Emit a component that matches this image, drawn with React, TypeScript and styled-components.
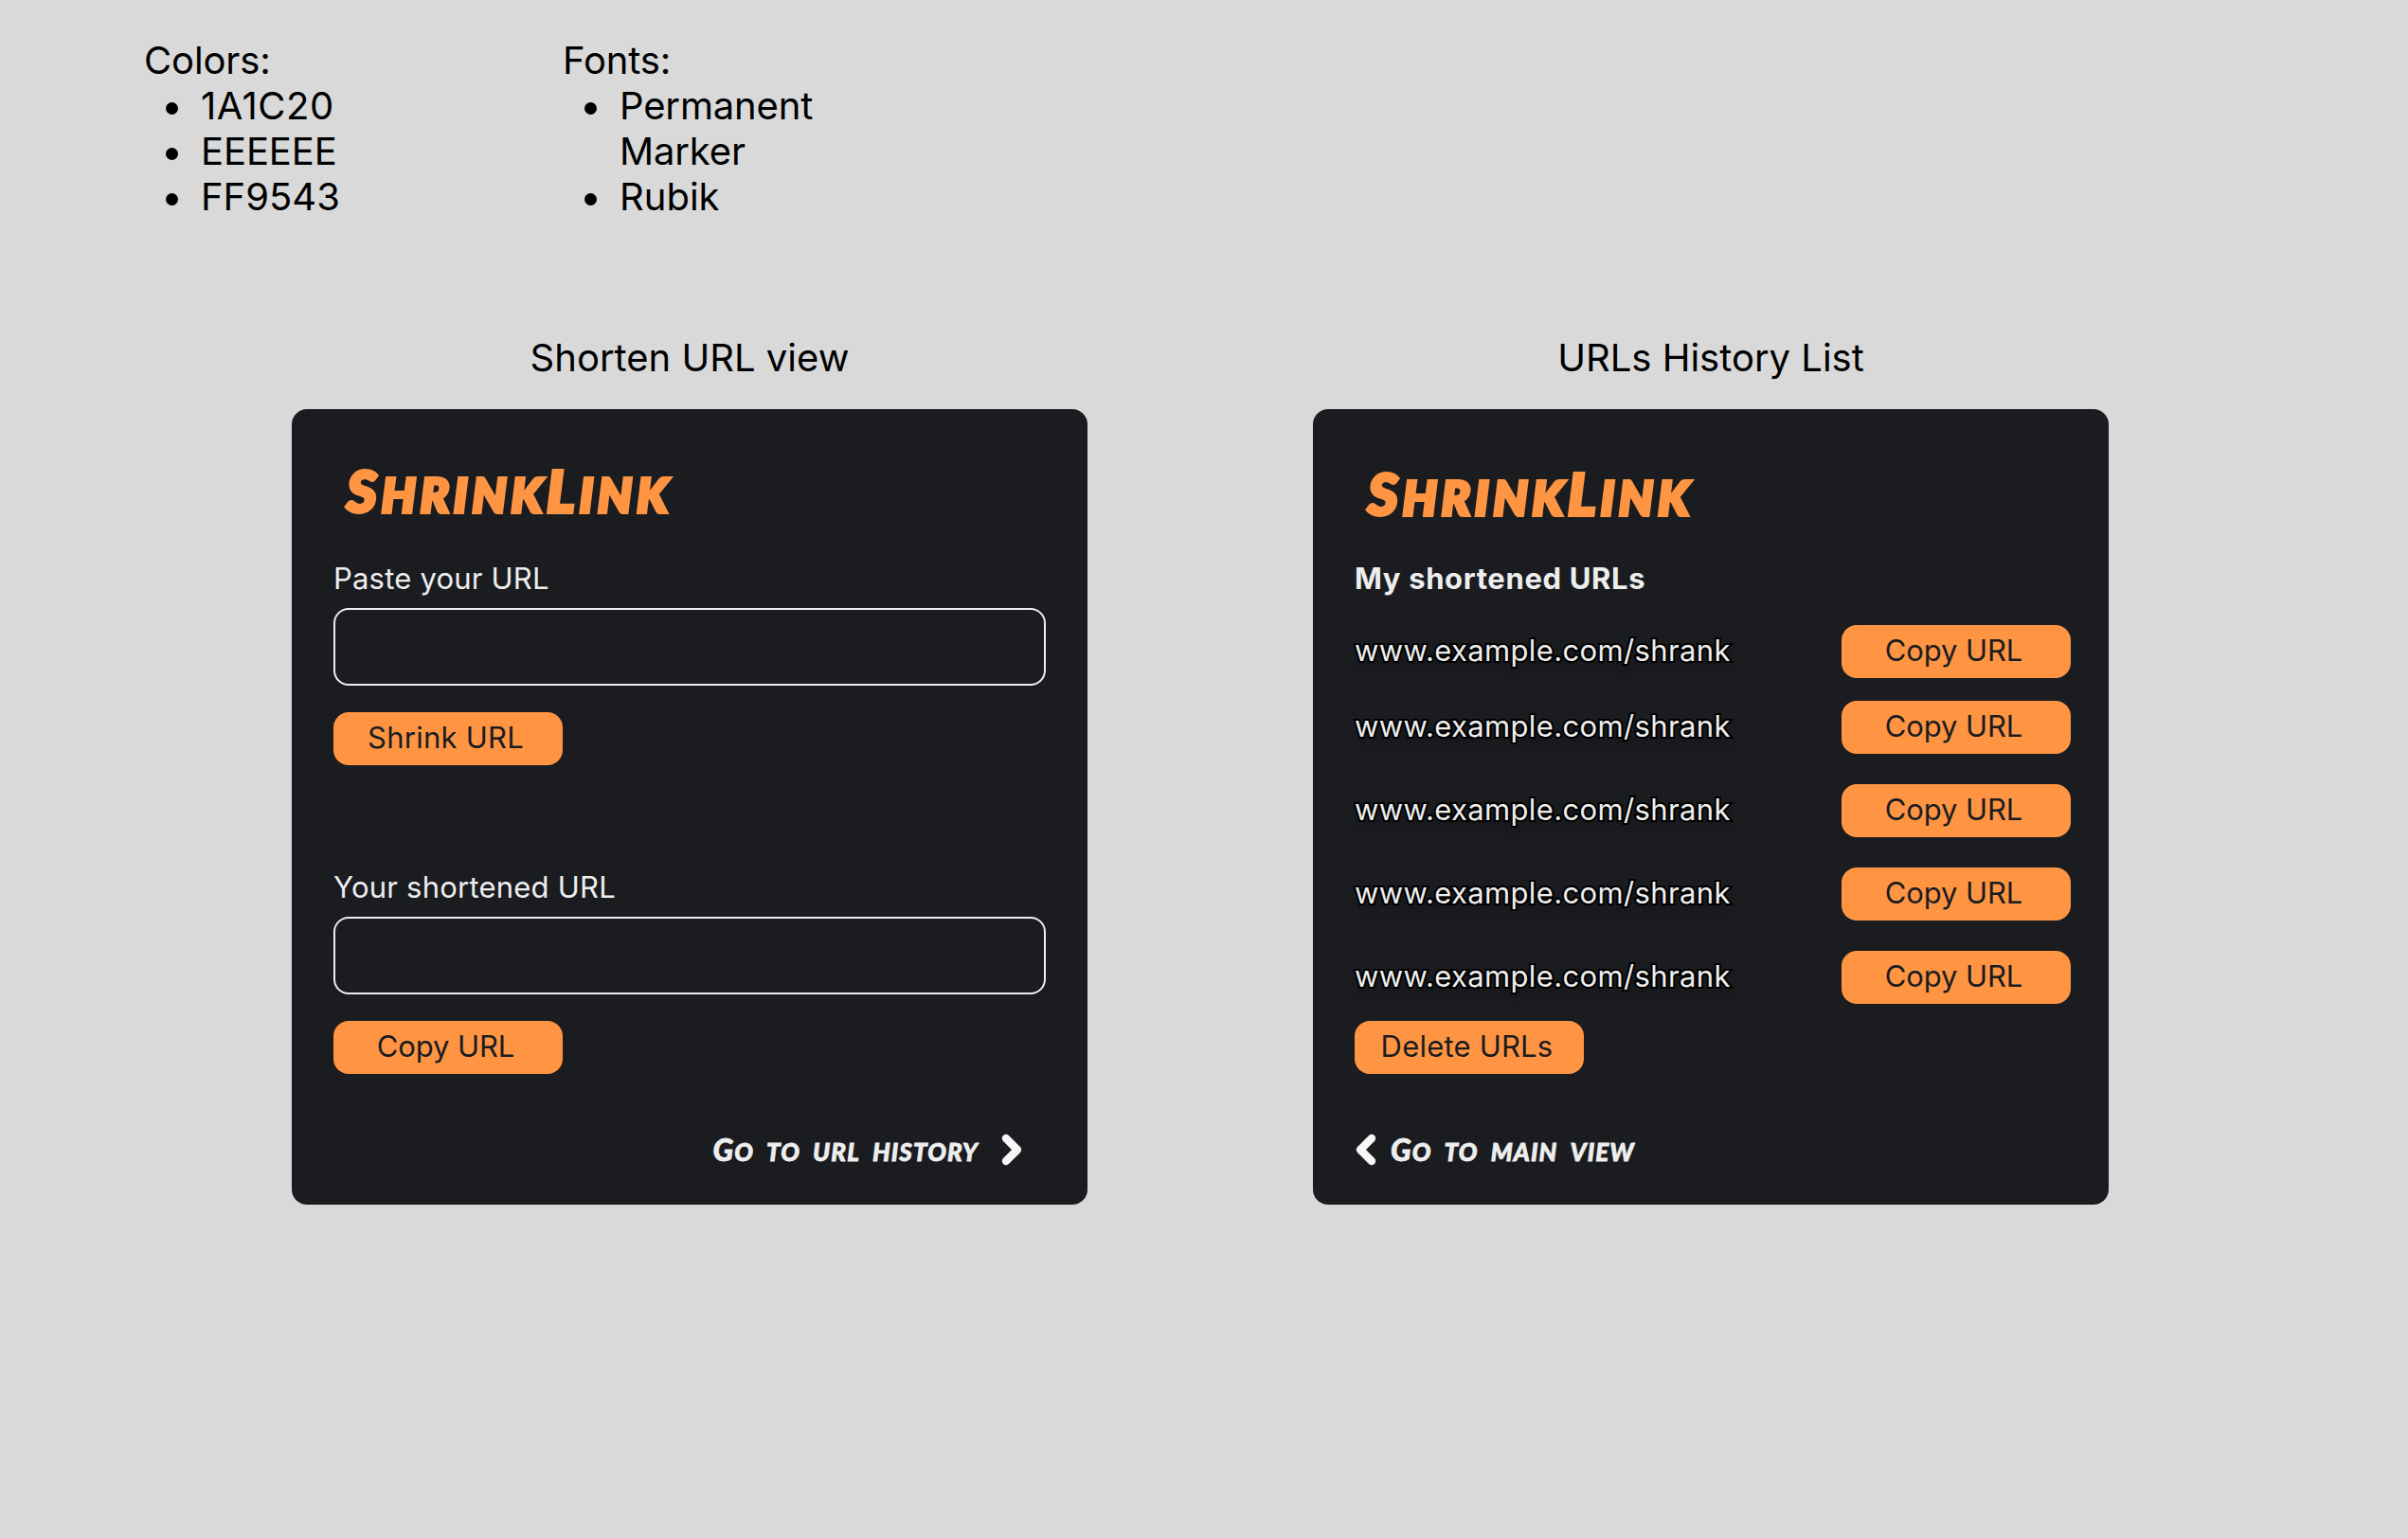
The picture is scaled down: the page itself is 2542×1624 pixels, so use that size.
import React from "react";
import styled, { createGlobalStyle } from "styled-components";

const color = {
  canvas: "#d9d9d9",
  dark: "#1a1c20",
  light: "#eeeeee",
  accent: "#ff9543",
};

const GlobalStyle = createGlobalStyle`
  *, *::before, *::after { box-sizing: border-box; }
  body { margin: 0; background: ${color.canvas}; }
`;

const Canvas = styled.main`
  width: 2542px;
  height: 1624px;
  overflow: hidden;
  background: ${color.canvas};
  color: #000;
  font: 400 40px/48px Inter, "Liberation Sans", sans-serif;
`;

const Notes = styled.header`
  display: flex;
  padding: 40px 0 0 152px;
  height: 354px;
`;

const Note = styled.section`
  width: 442px;
`;

const NoteTitle = styled.div`
  height: 48px;
  letter-spacing: -0.15px;
`;

const NoteList = styled.ul`
  list-style: none;
  margin: 0;
  padding: 0 0 0 23px;
  width: 290px;
`;

const NoteItem = styled.li<{ $spacing: number }>`
  display: flex;
  gap: 24px;
  letter-spacing: ${(p) => p.$spacing}px;

  &::before {
    content: "";
    flex: none;
    width: 13px;
    height: 13px;
    margin-top: 20px;
    border-radius: 50%;
    background: #000;
  }
`;

const Board = styled.div`
  display: flex;
  gap: 238px;
  padding-left: 308px;
`;

const View = styled.section`
  width: 840px;
`;

const ViewTitle = styled.h2`
  margin: 0 0 30px;
  font: inherit;
  text-align: center;
`;

const Card = styled.div<{ $right: number }>`
  display: flex;
  flex-direction: column;
  height: 840px;
  padding: 0 ${(p) => p.$right}px 0 44px;
  border-radius: 16px;
  background: ${color.dark};
  color: ${color.light};
  font: 400 31px/38px Inter, "Liberation Sans", sans-serif;
`;

const Marker = styled.span`
  font-family: Lato, "Liberation Sans", sans-serif;
  font-style: italic;
  font-weight: 900;
  font-variant-caps: small-caps;
  white-space: pre;
`;

const Small = styled.span`
  font-size: 1.17em;
`;

const Logo = styled(Marker)<{ $drop?: number }>`
  display: block;
  height: 160px;
  padding: ${(p) => 52 + (p.$drop ?? 0)}px 0 0 14px;
  color: ${color.accent};
  font-size: 61px;
  line-height: 60px;
  letter-spacing: 5px;
  -webkit-text-stroke: 4px ${color.accent};
`;

const Label = styled.label<{ $spacing: number; $bold?: boolean }>`
  height: 50px;
  font-weight: ${(p) => (p.$bold ? 700 : 400)};
  letter-spacing: ${(p) => p.$spacing}px;
`;

const Field = styled.input`
  flex: none;
  width: 752px;
  height: 82px;
  margin: 0 0 28px;
  padding: 0 20px;
  border: 2px solid ${color.light};
  border-radius: 16px;
  background: transparent;
  color: inherit;
  font: inherit;
  outline: none;
`;

const Button = styled.button<{ $spacing?: number }>`
  flex: none;
  width: 242px;
  height: 56px;
  padding: 0 5px 2px 0;
  border: 0;
  border-radius: 16px;
  background: ${color.accent};
  color: ${color.dark};
  font: inherit;
  letter-spacing: ${(p) => p.$spacing ?? -0.1}px;
  text-align: center;
`;

const Group = styled.div`
  display: flex;
  flex-direction: column;
  height: 326px;
`;

const List = styled.div`
  display: flex;
  flex-direction: column;
  gap: 32px;
  padding-top: 18px;
  margin-bottom: 18px;
`;

const Row = styled.div<{ $tight?: boolean }>`
  display: flex;
  align-items: center;
  justify-content: space-between;
  margin-bottom: ${(p) => (p.$tight ? -8 : 0)}px;
`;

const Link = styled.span`
  padding-bottom: 2px;
  letter-spacing: 0.36px;
  paint-order: stroke fill;
  -webkit-text-stroke: 4px #000;
  text-shadow: 0 8px 8px rgba(0, 0, 0, 0.25);
`;

const Footer = styled.nav<{ $end?: boolean }>`
  display: flex;
  align-items: center;
  justify-content: ${(p) => (p.$end ? "flex-end" : "flex-start")};
  gap: ${(p) => (p.$end ? 24 : 15)}px;
  height: 36px;
  margin-top: 62px;
  padding: 0 ${(p) => (p.$end ? "25px 0 0" : "0 0 1px")};
`;

const FooterText = styled(Marker)`
  padding-bottom: 2px;
  font-size: 32px;
  line-height: 34px;
  letter-spacing: 1.1px;
  word-spacing: 4px;
  -webkit-text-stroke: 0.8px ${color.light};
`;

const Chevron = styled.svg<{ $flip?: boolean }>`
  flex: none;
  width: 22px;
  height: 34px;
  transform: ${(p) => (p.$flip ? "scaleX(-1)" : "none")};
`;

const Arrow = ({ flip }: { flip?: boolean }) => (
  <Chevron viewBox="0 0 22 34" $flip={flip}>
    <path
      d="M5 5L17 17L5 29"
      fill="none"
      stroke="#f7f7f7"
      strokeWidth="8.4"
      strokeLinecap="round"
      strokeLinejoin="round"
    />
  </Chevron>
);

const Brand = ({ drop }: { drop?: number }) => (
  <Logo $drop={drop}>
    S<Small>hrink</Small>L<Small>ink</Small>
  </Logo>
);

const notes = [
  {
    title: "Colors:",
    items: [
      { text: "1A1C20", spacing: 0.5 },
      { text: "EEEEEE", spacing: -0.1 },
      { text: "FF9543", spacing: 0 },
    ],
  },
  {
    title: "Fonts:",
    items: [
      { text: "Permanent Marker", spacing: -0.15 },
      { text: "Rubik", spacing: 0 },
    ],
  },
];

const urls = Array.from({ length: 5 }, () => "www.example.com/shrank");

export default function App() {
  return (
    <Canvas>
      <GlobalStyle />
      <Notes>
        {notes.map((note) => (
          <Note key={note.title}>
            <NoteTitle>{note.title}</NoteTitle>
            <NoteList>
              {note.items.map((item) => (
                <NoteItem key={item.text} $spacing={item.spacing}>
                  {item.text}
                </NoteItem>
              ))}
            </NoteList>
          </Note>
        ))}
      </Notes>
      <Board>
        <View>
          <ViewTitle>Shorten URL view</ViewTitle>
          <Card $right={44}>
            <Brand />
            <Group>
              <Label $spacing={0.2}>Paste your URL</Label>
              <Field />
              <Button $spacing={0.25}>Shrink URL</Button>
            </Group>
            <Label $spacing={0.22}>Your shortened URL</Label>
            <Field />
            <Button>Copy URL</Button>
            <Footer $end>
              <FooterText>
                G<Small>o to url history</Small>
              </FooterText>
              <Arrow />
            </Footer>
          </Card>
        </View>
        <View>
          <ViewTitle>URLs History List</ViewTitle>
          <Card $right={40}>
            <Brand drop={3} />
            <Label as="div" $bold $spacing={0.65}>
              My shortened URLs
            </Label>
            <List>
              {urls.map((url, i) => (
                <Row key={i} $tight={i === 0}>
                  <Link>{url}</Link>
                  <Button>Copy URL</Button>
                </Row>
              ))}
            </List>
            <Button $spacing={0.2}>Delete URLs</Button>
            <Footer>
              <Arrow flip />
              <FooterText>
                G<Small>o to main view</Small>
              </FooterText>
            </Footer>
          </Card>
        </View>
      </Board>
    </Canvas>
  );
}
